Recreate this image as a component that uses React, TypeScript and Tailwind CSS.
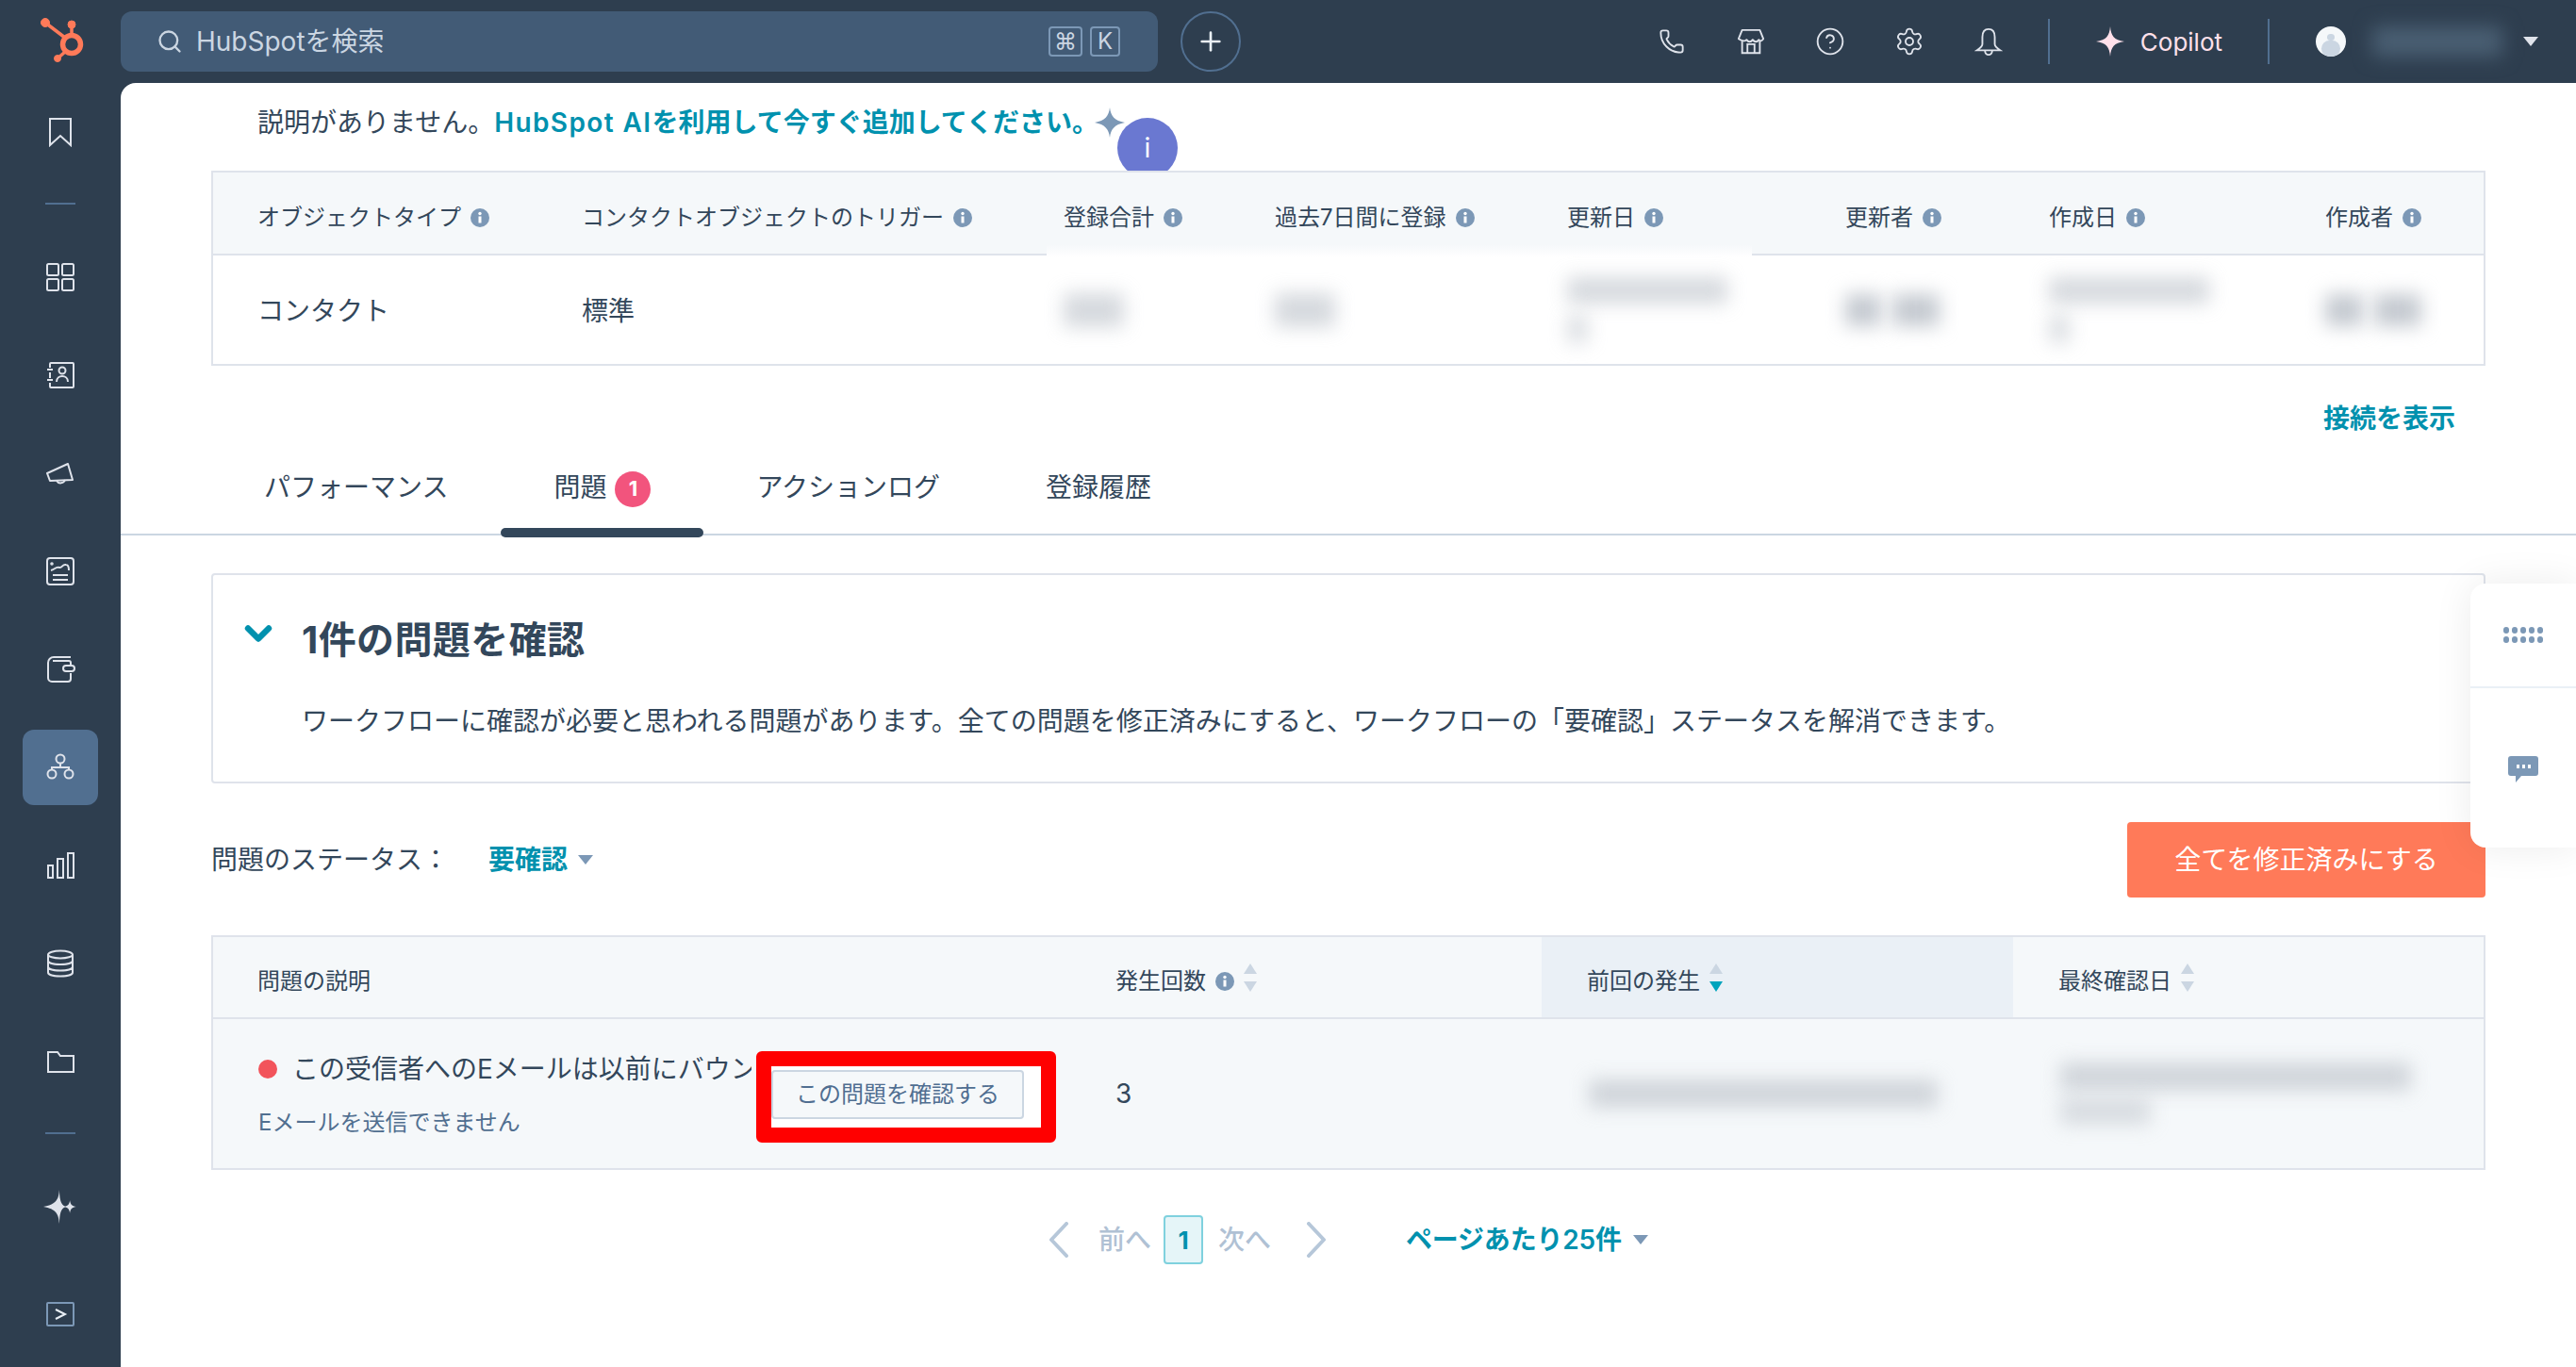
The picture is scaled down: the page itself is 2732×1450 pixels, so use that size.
import { Phone, CircleHelp, Settings, Search, Plus, ChevronDown } from "lucide-react";
import type { ReactNode } from "react";

const Svg = ({ children, className = "w-8 h-8" }: { children: ReactNode; className?: string }) => (
  <svg viewBox="0 0 32 32" fill="none" stroke="#dfe3eb" strokeWidth="2" className={className}>
    {children}
  </svg>
);

const navIcons: Record<string, ReactNode> = {
  bookmark: <path d="M5 2h22v28L16 20 5 30z" />,
  grid: (
    <>
      <rect x="2" y="2" width="12" height="12" rx="1.5" />
      <rect x="18" y="2" width="12" height="12" rx="1.5" />
      <rect x="2" y="18" width="12" height="12" rx="1.5" />
      <rect x="18" y="18" width="12" height="12" rx="1.5" />
    </>
  ),
  contact: (
    <>
      <path d="M5 8V4a1 1 0 0 1 1-1h23a1 1 0 0 1 1 1v24a1 1 0 0 1-1 1H6a1 1 0 0 1-1-1v-4M5 13v6" />
      <path d="M2 10h6M2 21h6" />
      <circle cx="18" cy="11" r="3.5" />
      <path d="M12 23c0-4 3-6 6-6s6 2 6 6" />
    </>
  ),
  megaphone: (
    <>
      <path d="M2 16 24 6l5 17-24 1-3-8z" strokeLinejoin="round" />
      <path d="M12 24a5 5 0 0 0 9-1" />
    </>
  ),
  news: (
    <>
      <rect x="2" y="2" width="28" height="28" rx="3" />
      <path d="M8 20h16M8 25h16" />
      <path d="M6 15c4-1 5-4 9-3 3 1 3-4 7-3 3 0 3 4 3 6" />
      <circle cx="7" cy="8" r="0.8" />
    </>
  ),
  wallet: (
    <>
      <path d="M27 3H9a6 6 0 0 0-6 6v16a4 4 0 0 0 4 4h17a3 3 0 0 0 3-3v-6M27 12V9a2 2 0 0 0-2-2H8" />
      <rect x="19" y="12" width="12" height="6" rx="3" />
    </>
  ),
  flow: (
    <>
      <circle cx="16" cy="7" r="4.5" />
      <circle cx="7" cy="23" r="4.5" />
      <circle cx="25" cy="23" r="4.5" />
      <path d="M16 11.5V16M7 18.5V16h18v2.5" />
    </>
  ),
  bars: (
    <>
      <rect x="3" y="16" width="5" height="13" />
      <rect x="13" y="9" width="6" height="20" />
      <rect x="24" y="3" width="6" height="26" />
    </>
  ),
  db: (
    <>
      <ellipse cx="16" cy="6.5" rx="13" ry="4" />
      <path d="M3 6.5v19c0 2.5 6 4 13 4s13-1.500 13-4v-19M3 13c0 2.500 6 4 13 4s13-1.500 13-4M3 19.500c0 2.500 6 4 13 4s13-1.500 13-4" />
    </>
  ),
  folder: <path d="M3 27V6h10l3 4h14v17z" />,
};

const NavItem = ({ name, active }: { name: string; active?: boolean }) => (
  <div className="h-[104px] flex items-center justify-center">
    <div className={`w-20 h-20 rounded-xl flex items-center justify-center ${active ? "bg-[#516f90]" : ""}`}>
      <Svg>{navIcons[name]}</Svg>
    </div>
  </div>
);

const Divider = () => (
  <div className="h-12 flex items-center justify-center">
    <div className="w-8 h-[2px] bg-[#516f90]" />
  </div>
);

const Sidebar = () => (
  <aside className="w-32 shrink-0 flex flex-col">
    <NavItem name="bookmark" />
    <Divider />
    <div className="h-[2px]" />
    <NavItem name="grid" />
    <NavItem name="contact" />
    <NavItem name="megaphone" />
    <NavItem name="news" />
    <NavItem name="wallet" />
    <NavItem name="flow" active />
    <NavItem name="bars" />
    <NavItem name="db" />
    <NavItem name="folder" />
    <Divider />
    <div className="h-[108px] flex items-center justify-center">
      <svg viewBox="0 0 32 32" fill="#dfe3eb" className="w-9 h-9">
        <path d="M15 0c.5 9 1 14 6 16-5 2-5.500 7-6 16-.5-9-3-14-15-16C12 14 14.500 9 15 0z" />
        <path d="M25 10c.5 4 2 5.500 6 6-4 .5-5.500 2-6 6-.5-4-2-5.500-6-6 4-.5 5.500-2 6-6z" />
      </svg>
    </div>
    <div className="mt-auto pb-1 h-[108px] flex items-center justify-center">
      <svg viewBox="0 0 32 32" fill="none" className="w-8 h-8">
        <rect x="2" y="4" width="28" height="24" stroke="#7c98b6" strokeWidth="2" rx="1" />
        <path d="M11 11l10 5-10 5" stroke="#eaf0f6" strokeWidth="2" />
      </svg>
    </div>
  </aside>
);

const TopIcon = ({ children }: { children: ReactNode }) => (
  <div className="w-[84px] flex items-center justify-center">{children}</div>
);

const TopBar = () => (
  <header className="h-[88px] shrink-0 flex items-center">
    <div className="w-32 shrink-0 flex justify-center">
      <svg viewBox="0 0 100 100" className="w-[100px] h-[100px]" fill="none" stroke="#ff7a59">
        <circle cx="62" cy="53" r="9.500" strokeWidth="5.500" />
        <path d="M62 32v10M34 30l21 16M47 68l8-7" strokeWidth="3.500" />
        <circle cx="62" cy="32" r="4" fill="#ff7a59" strokeWidth="1" />
        <circle cx="34" cy="30" r="4.500" fill="#ff7a59" strokeWidth="1" />
        <circle cx="47" cy="68" r="3.500" fill="#ff7a59" strokeWidth="1" />
      </svg>
    </div>
    <div className="w-[1100px] h-16 rounded-xl bg-[#425b76] flex items-center pl-[38px] pr-10 text-[28px] text-[#cbd6e2]">
      <Search className="w-7 h-7 mr-[14px]" strokeWidth={2} />
      <span>HubSpotを検索</span>
      <div className="ml-auto flex gap-2 text-[24px] text-[#cbd6e2]">
        <span className="w-9 h-8 border-2 border-[#7c98b6] rounded flex items-center justify-center">⌘</span>
        <span className="w-8 h-8 border-2 border-[#7c98b6] rounded flex items-center justify-center">K</span>
      </div>
    </div>
    <div className="ml-6 w-16 h-16 rounded-full border-2 border-[#516f90] flex items-center justify-center">
      <Plus className="w-8 h-8 text-[#eaf0f6]" strokeWidth={2} />
    </div>
    <div className="ml-auto flex items-center text-[#dfe3eb]">
      <div className="flex items-center mr-[21px]">
        <TopIcon>
          <Phone className="w-7 h-7" strokeWidth={1.6} />
        </TopIcon>
        <TopIcon>
          <Svg className="w-[30px] h-[30px]">
            <path d="M6 3h20l4 10c-2 3-4 3-5 1-2 3-5 3-7 0-2 3-5 3-7 0-1 2-4 2-9-1z" strokeLinejoin="round" />
            <path d="M6 16v13h20V16M12 29V19h8v10" />
          </Svg>
        </TopIcon>
        <TopIcon>
          <CircleHelp className="w-8 h-8" strokeWidth={1.4} />
        </TopIcon>
        <TopIcon>
          <Settings className="w-8 h-8" strokeWidth={1.4} />
        </TopIcon>
        <TopIcon>
          <Svg className="w-[30px] h-[30px]">
            <path d="M16 2c-5 0-7 4-7 9v8c0 3-3 5-6 7h26c-3-2-6-4-6-7v-8c0-5-2-9-7-9zM12 27a4 4 0 0 0 8 0" />
          </Svg>
        </TopIcon>
      </div>
      <div className="w-[2px] h-12 bg-[#516f90]" />
      <div className="flex items-center ml-12 mr-12">
        <svg viewBox="0 0 32 32" fill="#ffe0ea" className="w-8 h-8">
          <path d="M16 0c.8 10 4 14.500 15 16-11 1.500-14.200 6-15 16-.8-10-4-14.500-15-16C12 14.500 15.200 10 16 0z" />
        </svg>
        <span className="ml-4 text-[26px] text-[#ffe0ea]">Copilot</span>
      </div>
      <div className="w-[2px] h-12 bg-[#516f90]" />
      <div className="ml-[49px] w-8 h-8 rounded-full bg-[#f5f8fa] overflow-hidden flex flex-col items-center">
        <div className="w-2 h-2 mt-2 rounded-full bg-[#cbd6e2]" />
        <div className="w-5 h-5 rounded-full bg-[#cbd6e2]" />
      </div>
      <div className="ml-7 w-[138px] h-8 bg-[#4a5f73] blur-[10px]" />
      <div className="ml-[22px] mr-10 w-0 h-0 border-x-[8px] border-x-transparent border-t-[10px] border-t-[#dfe3eb]" />
    </div>
  </header>
);

const Info = () => (
  <svg viewBox="0 0 20 20" className="w-5 h-5 shrink-0 ml-[10px]">
    <circle cx="10" cy="10" r="10" fill="#7c98b6" />
    <rect x="8.500" y="8.500" width="3" height="7" fill="#fff" />
    <circle cx="10" cy="5.500" r="1.700" fill="#fff" />
  </svg>
);

const Sort = ({ active }: { active?: boolean }) => (
  <svg viewBox="0 0 14 30" className="w-[14px] h-[30px] ml-[10px] -mt-2 shrink-0">
    <path d="M7 0l7 11H0z" fill="#cbd6e2" />
    <path d="M7 30L0 19h14z" fill={active ? "#00a4bd" : "#cbd6e2"} />
  </svg>
);

const Blur = ({ className }: { className: string }) => <div className={`bg-[#c4c9d0] blur-[10px] ${className}`} />;

const summaryCols = [
  { label: "オブジェクトタイプ", w: "w-[344px]" },
  { label: "コンタクトオブジェクトのトリガー", w: "w-[511px]" },
  { label: "登録合計", w: "w-[224px]" },
  { label: "過去7日間に登録", w: "w-[310px]" },
  { label: "更新日", w: "w-[295px]" },
  { label: "更新者", w: "w-[216px]" },
  { label: "作成日", w: "w-[293px]" },
  { label: "作成者", w: "flex-1" },
];

const SummaryTable = () => (
  <div className="relative mt-[31px] border-2 border-[#dfe3eb] text-[#33475b]">
    <div className="flex h-[88px] bg-[#f5f8fa] text-[24px] border-b-2 border-b-[#dfe3eb]">
      {summaryCols.map((c) => (
        <div key={c.label} className={`${c.w} pl-[47px] pt-[10px] flex items-center`}>
          <span className="whitespace-nowrap">{c.label}</span>
          <Info />
        </div>
      ))}
    </div>
    {/* blurred patch that also swallows the header rule */}
    <div className="absolute left-[884px] top-[76px] w-[748px] h-[14px] bg-gradient-to-b from-[#f5f8fa] to-white" />
    <div className="flex h-[115px] items-center text-[28px]">
      <div className="w-[344px] pl-[47px] pt-[2px]">コンタクト</div>
      <div className="w-[511px] pl-[47px] pt-[2px]">標準</div>
      <div className="w-[224px] pl-[47px]">
        <Blur className="w-[64px] h-[36px] opacity-70" />
      </div>
      <div className="w-[310px] pl-[47px]">
        <Blur className="w-[64px] h-[36px] opacity-70" />
      </div>
      <div className="w-[295px] pl-[47px] flex flex-col gap-3">
        <Blur className="w-[170px] h-[28px] opacity-70" />
        <Blur className="w-[22px] h-[30px] opacity-60" />
      </div>
      <div className="w-[216px] pl-[47px] flex gap-3">
        <Blur className="w-[38px] h-[34px]" />
        <Blur className="w-[50px] h-[34px]" />
      </div>
      <div className="w-[293px] pl-[47px] flex flex-col gap-3">
        <Blur className="w-[170px] h-[28px] opacity-70" />
        <Blur className="w-[22px] h-[30px] opacity-60" />
      </div>
      <div className="flex-1 pl-[47px] flex gap-3">
        <Blur className="w-[40px] h-[34px]" />
        <Blur className="w-[50px] h-[34px]" />
      </div>
    </div>
  </div>
);

const Tabs = () => (
  <div className="-mx-24 px-24 flex h-[104px] border-b-2 border-[#cbd6e2] text-[28px] text-[#33475b]">
    <div className="px-14 pt-[3px] flex items-center">パフォーマンス</div>
    <div className="relative px-14 pt-[3px] flex items-center">
      <span>問題</span>
      <span className="ml-[9px] mt-1 w-[38px] h-[38px] rounded-full bg-[#f2547d] text-white text-[22px] font-bold flex items-center justify-center">
        1
      </span>
      <div className="absolute left-0 right-0 -bottom-[4px] h-[10px] rounded-full bg-[#33475b]" />
    </div>
    <div className="px-14 pt-[3px] flex items-center">アクションログ</div>
    <div className="px-14 pt-[3px] flex items-center">登録履歴</div>
  </div>
);

const IssueCard = () => (
  <div className="mt-10 h-[223px] border-2 border-[#dfe3eb] rounded pt-[41px] text-[#33475b]">
    <div className="flex items-start pl-8">
      <ChevronDown className="w-11 h-11 -ml-[6px] text-[#0091ae] -mt-[1px]" strokeWidth={3.5} />
      <h2 className="ml-6 text-[40px] leading-[56px] font-bold tracking-[0.4px]">1件の問題を確認</h2>
    </div>
    <p className="mt-[38px] pl-[94px] text-[28px] leading-10">
      ワークフローに確認が必要と思われる問題があります。全ての問題を修正済みにすると、ワークフローの「要確認」ステータスを解消できます。
    </p>
  </div>
);

const FilterRow = () => (
  <div className="mt-[41px] flex items-center h-20 text-[28px] text-[#33475b]">
    <span>問題のステータス：</span>
    <span className="ml-[42px] font-semibold text-[#0091ae]">要確認</span>
    <span className="ml-[11px] w-0 h-0 border-x-[8px] border-x-transparent border-t-[10px] border-t-[#7c98b6]" />
    <button className="ml-auto w-[380px] h-20 rounded bg-[#ff7a59] text-white">全てを修正済みにする</button>
  </div>
);

const IssueTable = () => (
  <div className="relative mt-10 border-2 border-[#dfe3eb] bg-[#f5f8fa] text-[#33475b]">
    <div className="flex h-[87px] border-b-2 border-[#dfe3eb] text-[24px]">
      <div className="w-[909px] pl-[47px] pt-2 flex items-center">問題の説明</div>
      <div className="w-[500px] pl-[48px] pt-2 flex items-center">
        発生回数
        <Info />
        <Sort />
      </div>
      <div className="w-[500px] pl-[48px] pt-2 flex items-center bg-[#eaf0f6]">
        前回の発生
        <Sort active />
      </div>
      <div className="flex-1 pl-[48px] pt-2 flex items-center">
        最終確認日
        <Sort />
      </div>
    </div>
    <div className="flex h-[158px]">
      <div className="w-[909px] pl-[48px] pt-[33px]">
        <div className="flex items-center w-[523px] overflow-hidden whitespace-nowrap text-[28px] leading-10">
          <span className="w-5 h-5 shrink-0 rounded-full bg-[#f2545b] mr-4" />
          この受信者へのEメールは以前にバウンスしています
        </div>
        <div className="mt-[21px] text-[24px] leading-8 text-[#516f90]">Eメールを送信できません</div>
      </div>
      <div className="w-[500px] pl-[48px] flex items-center text-[28px]">3</div>
      <div className="w-[500px] pl-[50px] flex items-center">
        <Blur className="w-[370px] h-[30px] opacity-75" />
      </div>
      <div className="flex-1 pl-[50px] flex flex-col justify-center gap-2">
        <Blur className="w-[372px] h-[30px] opacity-75" />
        <Blur className="w-[96px] h-[28px] opacity-60 bg-[#bcc8da]" />
      </div>
    </div>
    {/* red annotation around the button */}
    <div className="absolute left-[576px] top-[121px] w-[318px] h-[97px] border-[16px] border-[#ff0000] rounded-md bg-white flex items-start">
      <button className="mt-1 w-[268px] h-[52px] bg-[#f5f8fa] border-2 border-[#cbd6e2] rounded text-[24px] text-[#506e91]">
        この問題を確認する
      </button>
    </div>
  </div>
);

const PageChevron = ({ d }: { d: string }) => (
  <svg viewBox="0 0 22 38" fill="none" stroke="#b6c7d9" strokeWidth="4" strokeLinecap="round" strokeLinejoin="round" className="w-[22px] h-[38px] shrink-0">
    <path d={d} />
  </svg>
);

const Pagination = () => (
  <div className="mt-12 flex items-center h-[52px] text-[28px] pl-[888px]">
    <PageChevron d="M19 2 3 19l16 17" />
    <span className="ml-[31px] font-medium text-[#b0c1d4]">前へ</span>
    <span className="ml-[13px] w-[42px] h-[52px] rounded border-2 border-[#7fd1de] bg-[#e5f5f8] text-[#0091ae] text-[26px] font-bold flex items-center justify-center">
      1
    </span>
    <span className="ml-4 font-medium text-[#b0c1d4]">次へ</span>
    <div className="ml-[37px]">
      <PageChevron d="M3 2l16 17L3 36" />
    </div>
    <span className="ml-[84px] font-semibold text-[#0091ae] tracking-[-0.2px]">ページあたり25件</span>
    <span className="ml-3 w-0 h-0 border-x-[8px] border-x-transparent border-t-[10px] border-t-[#7c98b6]" />
  </div>
);

const SidePanel = () => (
  <div className="absolute right-0 top-[531px] w-[112px] h-[280px] bg-white rounded-l-2xl shadow-[0_0_40px_rgba(0,0,0,0.08)] flex flex-col">
    <div className="h-[111px] border-b-2 border-[#eaf0f6] flex items-center justify-center">
      <div className="grid grid-cols-5 gap-x-[3px] gap-y-[3px]">
        {Array.from({ length: 10 }).map((_, i) => (
          <span key={i} className="w-[6px] h-[7px] rounded-sm bg-[#7c98b6]" />
        ))}
      </div>
    </div>
    <div className="flex-1 flex items-start justify-center pt-[72px]">
      <svg viewBox="0 0 32 28" className="w-8 h-7">
        <path d="M3 0h26a3 3 0 0 1 3 3v15a3 3 0 0 1-3 3H14l-6 7v-7H3a3 3 0 0 1-3-3V3a3 3 0 0 1 3-3z" fill="#7c98b6" />
        <path d="M9 9h3v4H9zM15 9h3v4h-3zM21 9h3v4h-3z" fill="#fff" />
      </svg>
    </div>
  </div>
);

export default function App() {
  return (
    <div className="h-screen w-full overflow-hidden flex flex-col bg-[#2e3e4f] font-['Inter','Noto_Sans_CJK_JP',sans-serif]">
      <TopBar />
      <div className="flex-1 flex min-h-0">
        <Sidebar />
        <main className="relative flex-1 bg-white rounded-tl-2xl px-24 pt-[22px]">
          <div className="relative h-10 pl-[49px] flex items-center text-[28px] text-[#33475b]">
            <span>説明がありません。</span>
            <span className="font-semibold text-[#0091ae]">
              <span className="tracking-[1.4px]">HubSpot AI</span>を利用して今すぐ追加してください。
            </span>
            <svg viewBox="0 0 32 32" fill="#7c98b6" className="w-8 h-8 shrink-0 -ml-1">
              <path d="M16 0c1 9 5 14 16 16-11 2-15 7-16 16-1-9-5-14-16-16C11 14 15 9 16 0z" />
            </svg>
            <div className="absolute left-[961px] top-[15px] w-16 h-16 rounded-full bg-[#6a78d1] text-white text-[28px] flex items-center justify-center">
              i
            </div>
          </div>
          <SummaryTable />
          <div className="mt-9 h-10 pr-8 flex items-center justify-end text-[28px] font-semibold text-[#0091ae]">
            接続を表示
          </div>
          <Tabs />
          <IssueCard />
          <FilterRow />
          <IssueTable />
          <Pagination />
          <SidePanel />
        </main>
      </div>
    </div>
  );
}
